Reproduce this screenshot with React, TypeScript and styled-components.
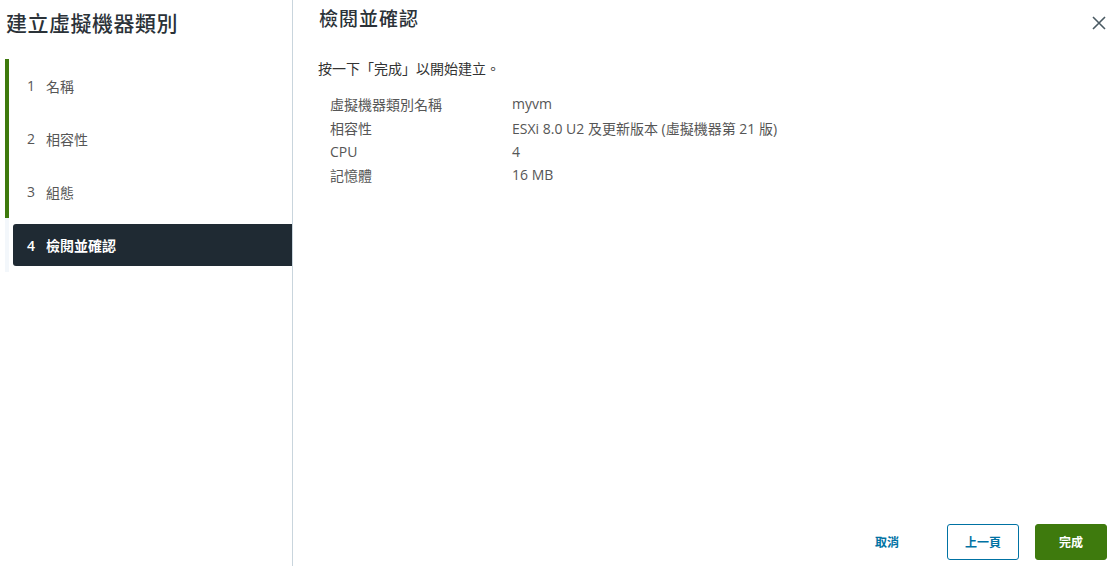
import {FC} from "react"
import styled, {createGlobalStyle} from "styled-components"

const GlobalStyle = createGlobalStyle`
    html, body {
        margin: 0;
        padding: 0;
        background: white;
    }

    body {
        font-family: "Open Sans", "Noto Sans CJK TC", sans-serif;
        color: #565656;
    }
`

interface Step {
    num: number
    label: string
    done: boolean
}

const steps: Step[] = [
    {num: 1, label: "名稱", done: true},
    {num: 2, label: "相容性", done: true},
    {num: 3, label: "組態", done: true},
    {num: 4, label: "檢閱並確認", done: false},
]

const summary: [string, string][] = [
    ["虛擬機器類別名稱", "myvm"],
    ["相容性", "ESXi 8.0 U2 及更新版本 (虛擬機器第 21 版)"],
    ["CPU", "4"],
    ["記憶體", "16 MB"],
]

const App: FC = () => {
    return <Modal>
        <GlobalStyle/>
        <Sidebar>
            <WizardTitle>建立虛擬機器類別</WizardTitle>
            <StepList>
                {steps.map(s => s.done
                    ? <StepItem key={s.num} done>
                        <StepNum>{s.num}</StepNum>{s.label}
                    </StepItem>
                    : <StepRail key={s.num}>
                        <ActiveStep>
                            <StepNum>{s.num}</StepNum>{s.label}
                        </ActiveStep>
                    </StepRail>
                )}
            </StepList>
        </Sidebar>

        <Content>
            <Header>
                <PageTitle>檢閱並確認</PageTitle>
                <CloseButton aria-label="關閉">
                    <svg width="14" height="14" viewBox="0 0 14 14">
                        <path d="M1 1 L13 13 M13 1 L1 13" stroke="#4a5a63" strokeWidth="1.6" fill="none"/>
                    </svg>
                </CloseButton>
            </Header>

            <Body>
                <Intro>按一下「完成」以開始建立。</Intro>
                <SummaryTable>
                    {summary.map(([k, v]) => <Row key={k}>
                        <Label>{k}</Label>
                        <Value>{v}</Value>
                    </Row>)}
                </SummaryTable>
            </Body>

            <Footer>
                <LinkButton>取消</LinkButton>
                <OutlineButton>上一頁</OutlineButton>
                <PrimaryButton>完成</PrimaryButton>
            </Footer>
        </Content>
    </Modal>
}

const Modal = styled.div`
    display: flex;
    width: 1118px;
    height: 566px;
    overflow: hidden;
`

const Sidebar = styled.div`
    width: 292px;
    flex-shrink: 0;
    border-right: 1px solid #c9d5dd;
    display: flex;
    flex-direction: column;
`

const WizardTitle = styled.h1`
    margin: 0;
    padding: 7px 0 0 6px;
    height: 52px;
    box-sizing: border-box;
    font-size: 21px;
    font-weight: 500;
    color: #2b3238;
    letter-spacing: 0.5px;
`

const StepList = styled.div`
    display: flex;
    flex-direction: column;
    margin: 7px 0 0 5px;
`

const StepItem = styled.div<{ done?: boolean }>`
    display: flex;
    align-items: center;
    height: 53px;
    padding-left: 18px;
    border-left: 4px solid ${p => p.done ? "#3e7a0d" : "#f3f7fb"};
    font-size: 14px;
    color: #565656;
`

const StepRail = styled.div`
    border-left: 4px solid #f3f7fb;
    padding: 6px 0;
`

const ActiveStep = styled.div`
    display: flex;
    align-items: center;
    height: 42px;
    margin-left: 4px;
    padding-left: 14px;
    border-radius: 3px 0 0 3px;
    background: #1f2a33;
    color: white;
    font-size: 14px;
    font-weight: 600;
`

const StepNum = styled.span`
    width: 19px;
    display: inline-block;
`

const Content = styled.div`
    flex: 1;
    display: flex;
    flex-direction: column;
    min-width: 0;
`

const Header = styled.div`
    display: flex;
    justify-content: space-between;
    align-items: flex-start;
    padding: 4px 12px 0 26px;
`

const PageTitle = styled.h2`
    margin: 0;
    font-size: 19px;
    font-weight: 500;
    color: #2b3238;
    letter-spacing: 1px;
`

const CloseButton = styled.button`
    border: none;
    background: none;
    padding: 0;
    margin-top: 12px;
    cursor: pointer;
`

const Body = styled.div`
    flex: 1;
    padding: 25px 0 0 25px;
`

const Intro = styled.p`
    margin: 0 0 14px;
    font-size: 14px;
    color: #333;
`

const SummaryTable = styled.div`
    display: flex;
    flex-direction: column;
    padding-left: 12px;
`

const Row = styled.div`
    display: grid;
    grid-template-columns: 182px 1fr;
    height: 23.7px;
    align-items: center;
    font-size: 14px;
`

const Label = styled.div`
    color: #565656;
`

const Value = styled.div`
    color: #565656;
`

const Footer = styled.div`
    display: flex;
    justify-content: flex-end;
    align-items: center;
    gap: 16px;
    padding: 0 11px 6px 0;
`

const BaseButton = styled.button`
    height: 36px;
    min-width: 72px;
    border-radius: 3px;
    font-family: "Open Sans", "Noto Sans CJK TC", sans-serif;
    font-size: 12px;
    font-weight: 600;
    cursor: pointer;
    padding: 0 12px;
`

const LinkButton = styled(BaseButton)`
    border: none;
    background: none;
    color: #0072a3;
    margin-right: 8px;
`

const OutlineButton = styled(BaseButton)`
    border: 1px solid #0072a3;
    background: white;
    color: #0072a3;
`

const PrimaryButton = styled(BaseButton)`
    border: 1px solid #3e7a0d;
    background: #3e7a0d;
    color: white;
`

export default App
